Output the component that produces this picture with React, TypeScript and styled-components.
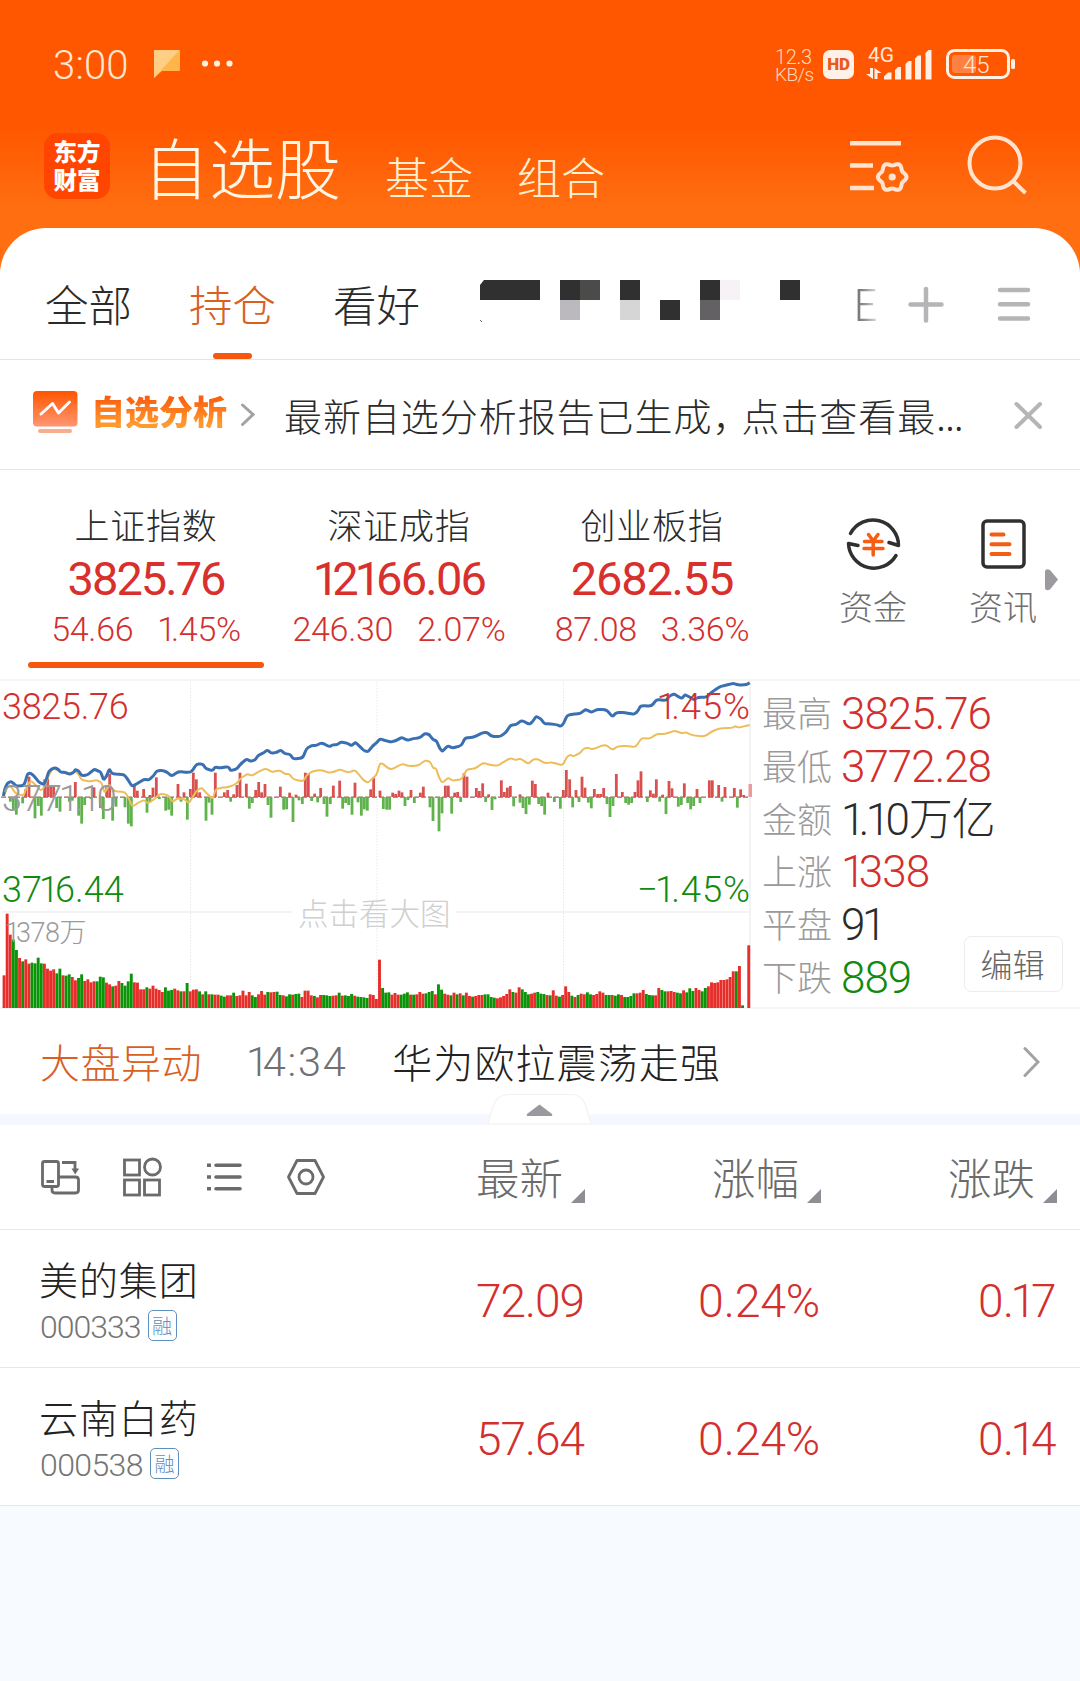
import React from "react";
import styled, { createGlobalStyle } from "styled-components";

const CJK = `"Noto Sans CJK SC", sans-serif`;
const NUM = `Roboto, "Noto Sans CJK SC", sans-serif`;

const GlobalStyle = createGlobalStyle`
  * { box-sizing: border-box; }
  html, body { margin: 0; padding: 0; }
  body { width: 1080px; background: #f7faff; font-family: ${CJK}; font-weight: 300; }
  svg { display: block; flex: none; }
`;

const Screen = styled.div`
  width: 1080px;
  height: 1681px;
  overflow: hidden;
  background: #f7faff;
`;

const Top = styled.div`
  height: 280px;
  background: linear-gradient(#ff5600 0, #ff5600 122px, #ff6f11 212px, #ff6f11 280px);
`;

const Txt = styled.span<{ s: number; c?: string; ls?: number; w?: number; lh?: number }>`
  display: block;
  white-space: nowrap;
  font-family: ${CJK};
  font-size: ${(p) => p.s}px;
  line-height: ${(p) => p.lh ?? p.s}px;
  letter-spacing: ${(p) => p.ls ?? 0}px;
  font-weight: ${(p) => p.w ?? 300};
  color: ${(p) => p.c ?? "#2b2b2b"};
`;
const Num = styled(Txt)`
  font-family: ${NUM};
`;
const Kern = styled.span<{ k: number }>`
  letter-spacing: -${(p) => p.k}em;
`;

/* Roboto's figures are tabular; the 1 is set tighter than the others. */
function Digits({ children }: { children: string }) {
  const chars = [...children];
  return (
    <>
      {chars.map((ch, i) => {
        const k = (ch === "1" && i < chars.length - 1 ? (i === 0 ? 0.15 : 0.11) : 0) + (chars[i + 1] === "1" ? 0.08 : 0);
        return k ? <Kern key={i} k={k}>{ch}</Kern> : ch;
      })}
    </>
  );
}

/* status bar */
const StatusBar = styled.div`
  height: 128px;
  display: flex;
  align-items: center;
  padding: 0 63px 0 53px;
`;
const Clock = styled(Num)`
  padding-top: 3px;
  width: 77px;
`;
const NoteIcon = styled.svg`
  margin-left: 23px;
`;
const StatusRight = styled.div`
  margin-left: auto;
  display: flex;
  align-items: center;
`;
const Speed = styled.div`
  width: 48px;
  padding-top: 3px;
`;
const HdBadge = styled.div`
  width: 31px;
  height: 29px;
  border-radius: 7px;
  background: #fff0e8;
  display: grid;
  place-items: center;
  margin-right: 11px;
`;

/* navigation */
const NavBar = styled.div`
  height: 100px;
  display: flex;
  align-items: flex-start;
  padding: 5px 50px 0 44px;
`;
const Logo = styled.div`
  width: 66px;
  height: 66px;
  border-radius: 14px;
  background: #ff4500;
  display: grid;
  place-content: center;
  padding-bottom: 2px;
`;
const NavTitles = styled.div`
  display: flex;
  align-items: flex-end;
  height: 68px;
  margin-left: 33px;
  gap: 44px;
`;
const NavIcons = styled.div`
  margin-left: auto;
  display: flex;
`;

/* card */
const Card = styled.div`
  position: relative;
  margin-top: -52px;
  background: #fff;
  border-radius: 46px 46px 0 0;
`;
const TabBar = styled.div`
  height: 132px;
  display: flex;
  border-bottom: 1px solid #e4e4e4;
  padding-left: 45px;
`;
const Tab = styled.div`
  position: relative;
  width: 88px;
  margin-right: 56px;
  padding-top: 54px;
`;
const TabMark = styled.div`
  position: absolute;
  left: 24px;
  bottom: 0;
  width: 39px;
  height: 6px;
  border-radius: 3px;
  background: #f6560e;
`;
const Mosaic = styled.svg`
  margin: 50px 0 0 3px;
`;
const CutTab = styled.div`
  width: 27px;
  padding-top: 49px;
  margin-left: 51px;
  overflow: hidden;
  height: 110px;
  mask-image: linear-gradient(90deg, #000 0, rgba(0, 0, 0, 0.75) 40%, transparent 110%);
`;
const TabIcons = styled.svg`
  margin: 54px 0 0 25px;
`;

const Notice = styled.div`
  height: 110px;
  display: flex;
  align-items: flex-start;
  border-bottom: 1px solid #e4e4e4;
  padding-left: 33px;
`;
const NoticeTag = styled.div`
  font: 900 34px/34px ${CJK};
  white-space: nowrap;
  margin: 34px 0 0 13px;
  background: linear-gradient(#fb5e10 10%, #ff9a2e 90%);
  background-clip: text;
  -webkit-background-clip: text;
  color: transparent;
`;
const NoticeText = styled(Txt)`
  margin: 36px 0 0 29px;
  width: 681px;
`;
const Comma = styled.span`
  letter-spacing: -9px;
`;
const Ellipsis = styled.span`
  letter-spacing: -0.6px;
`;

/* indices */
const IndexRow = styled.div`
  height: 209px;
  display: flex;
  padding-left: 20px;
`;
const IndexCol = styled.div`
  position: relative;
  width: 253px;
  display: flex;
  flex-direction: column;
  align-items: center;
  padding: 36px 1px 0 0;
`;
const IndexPair = styled.div`
  display: flex;
  gap: 24px;
  margin-top: 10px;
`;
const IndexValue = styled(Num)`
  margin-top: 14px;
`;
const IndexMark = styled.div`
  position: absolute;
  left: 8px;
  bottom: 11px;
  width: 236px;
  height: 6px;
  border-radius: 3px;
  background: #f6560e;
`;
const Shortcut = styled.div`
  width: 130px;
  display: flex;
  flex-direction: column;
  align-items: center;
  padding-top: 44px;
  gap: 15px;
`;
const Shortcuts = styled.div`
  display: flex;
  margin-left: 29px;
`;
const MoreArrow = styled.svg`
  margin-left: -23px;
`;

/* chart */
const Market = styled.div`
  height: 330px;
  display: flex;
  border-top: 2px solid #f5f5f5;
  border-bottom: 2px solid #f5f5f5;
`;
const ChartBox = styled.div`
  position: relative;
  width: 751px;
  margin-top: -1px;
`;
const ChartLabel = styled(Num)<{ x?: number; r?: number; y: number }>`
  position: absolute;
  top: ${(p) => p.y}px;
  ${(p) => (p.r !== undefined ? `right: ${p.r}px;` : `left: ${p.x}px;`)}
`;
const Stats = styled.div`
  position: relative;
  flex: 1;
  padding: 7px 0 0 11px;
`;
const StatRow = styled.div`
  display: flex;
  align-items: center;
  height: 52.7px;
  gap: 9px;
`;
const StatName = styled(Txt)`
  margin-bottom: 5px;
`;
const EditButton = styled.div`
  position: absolute;
  left: 213px;
  top: 255px;
  width: 99px;
  height: 56px;
  border: 1.5px solid #ececec;
  border-radius: 7px;
  background: #fff;
  display: grid;
  place-items: center;
  padding: 0 2px 2px 0;
`;

const NewsRow = styled.div`
  height: 105px;
  display: flex;
  align-items: center;
  padding: 0 40px 0 40px;
`;
const NewsText = styled(Txt)`
  margin-left: auto;
`;
const NewsTime = styled(Num)`
  margin-left: 44px;
  padding-top: 3px;
`;
const NewsHead = styled.div`
  display: flex;
  align-items: center;
  width: 681px;
  padding-bottom: 2px;
`;
const PushRight = styled.svg`
  margin-left: auto;
`;
const Strip = styled.div`
  position: relative;
  height: 11px;
  background: #f5f9ff;
`;
const Handle = styled.svg`
  position: absolute;
  left: 487px;
  top: -21px;
`;

/* table */
const HeadRow = styled.div`
  height: 105px;
  display: flex;
  background: #fff;
  border-bottom: 1px solid #e8e8e8;
`;
const Tools = styled.div`
  width: 430px;
  padding: 30px 0 0 38px;
`;
const HeadCell = styled.div`
  width: 236px;
  display: flex;
  justify-content: flex-end;
  gap: 8px;
  padding-top: 30px;
`;
const HeadFirst = styled(HeadCell)`
  width: 155px;
`;
const SortMark = styled.svg`
  margin-top: 34px;
`;
const StockRow = styled.div`
  height: 138px;
  display: flex;
  background: #fff;
  border-bottom: 1px solid #e8e8e8;
  padding: 29px 0 0 39px;
`;
const StockName = styled.div`
  width: 300px;
`;
const CodeLine = styled.div`
  display: flex;
  align-items: center;
  gap: 7px;
  margin-top: 10px;
  padding-left: 1px;
`;
const Code = styled(Num)`
  padding-top: 3px;
`;
const Badge = styled.div`
  width: 29px;
  height: 31px;
  border: 1.5px solid #5d90bf;
  border-radius: 5px;
  display: grid;
  place-items: center;
`;
const Cell = styled.div<{ wd: number }>`
  width: ${(p) => p.wd}px;
  display: flex;
  justify-content: flex-end;
  padding-top: 19px;
`;

const RED = "#d2302e";
const GREEN = "#12890f";

/* Volume: bar tops measured up from the floor, in thirds of a pixel; sign gives colour (minus = falling). */
const volume = [
  98, 283, 220, -205, -174, 150, -140, 146, 133, -136, -134, -151, -134, 133, 118, 112, 116, -104, -118, 98, -97, -101,
  93, 83, -90, -101, 81, 86, 77, 80, -80, -94, -92, 76, 71, -65, 67, 81, -75, -67, -80, -103, 77, 76, 56, 56, -62, 58,
  67, 58, 54, 48, -62, -52, -54, 58, 53, -50, 50, -75, 50, 55, 56, -50, 41, -50, 41, -41, 40, 40, -37, -34, 38, 38, -46,
  36, 38, 52, 38, 48, -38, -33, 41, 51, 40, -48, 47, 48, -49, -39, 38, -35, -41, 40, -42, -43, 33, -36, -30, 52, 52, 38,
  -36, 32, 39, -39, -38, -36, 37, 38, -46, 37, -38, -36, -42, 37, -34, -33, -32, -30, 27, 145,
];
volume.splice(97, 2);
volume.splice(118, 0, 41, 39);
const volumeB = [
  -60, -46, -47, 40, 45, 40, -40, -43, -47, 40, -40, 41, 48, 43, -44, -48, -51, 41, -71, -55, 43, 40, -38, 46, -41, 44,
  -38, 46, 36, -34, 36, 39, 39, -41, -41, -33, -31, 29, 32, 36, 42, 56, -48, 46, 62, -56, -48, -41, 43, 46, -48, -43,
  -42, 39, -38, 53, 37, -34, 39, 65, 48, -37, 33, -39, 43, 41, -47, -41, 39, 42, 50, 46, -39, -39, 39, -37, -41, 39,
  -33, -33, -36, -44, 44, 46, 54, -42, -39, -38, 38, 60, -54, -50, 50, 51, 48, -46, -44, 53, -47, -59, -51, 60, 54,
  -50, -60, 65, 77, 75, 77, 84, 84, 86, 93, 110, -110, 126, -8, 0, 188,
];
const volumes = volume.slice(0, 122).concat(volumeB);

/* Strength columns: [x, height], both in thirds of a pixel. */
const up: number[][] = [
  [87, 61], [77, 23], [134, 53], [143, 56], [152, 36], [161, 36], [226, 45], [282, 29], [329, 69], [320, 36], [403, 33],
  [412, 19], [431, 24], [450, 6], [459, 28], [469, 59], [534, 39], [552, 14], [571, 24], [580, 73], [589, 53], [599, 14],
  [646, 73], [673, 14], [683, 21], [701, 8], [711, 36], [720, 73], [739, 40], [767, 21], [776, 45], [785, 14], [795, 39],
  [841, 31], [869, 13], [888, 7], [916, 73], [925, 70], [944, 10], [962, 27], [1000, 34], [1019, 49], [1065, 43],
  [1112, 23], [1121, 59], [1140, 19], [1178, 13], [1187, 9], [1197, 19], [1206, 14], [1233, 21], [1261, 13], [1270, 31],
  [1336, 34], [1345, 34], [1364, 13], [1373, 15], [1392, 71], [1401, 61], [1429, 27], [1438, 18], [1448, 41], [1466, 8],
  [1504, 50], [1513, 15], [1522, 28], [1531, 33], [1560, 8], [1597, 49], [1606, 39], [1644, 13], [1690, 21], [1699, 81],
  [1709, 53], [1728, 21], [1746, 61], [1755, 28], [1783, 24], [1793, 9], [1802, 9], [1811, 27], [1849, 69], [1867, 15],
  [1905, 15], [1914, 50], [1923, 77], [1951, 20], [1960, 10], [1969, 53], [1988, 7], [2007, 48], [2016, 26], [2053, 41],
  [2091, 24], [2128, 50], [2137, 50], [2156, 36], [2175, 30], [2203, 27], [2222, 23], [2231, 6],
];
const down: number[][] = [
  [31, 14], [40, 37], [49, 53], [68, 19], [105, 64], [115, 27], [124, 56], [170, 33], [180, 44], [208, 14], [217, 11],
  [236, 56], [245, 80], [254, 24], [273, 6], [301, 33], [310, 66], [338, 71], [348, 29], [375, 31], [385, 80], [394, 88],
  [441, 47], [450, 16], [478, 6], [497, 41], [506, 38], [515, 56], [543, 14], [562, 68], [618, 71], [627, 17], [636, 53],
  [692, 14], [748, 35], [757, 18], [804, 24], [813, 62], [851, 38], [860, 37], [879, 75], [897, 10], [907, 21],
  [935, 12], [953, 16], [972, 21], [981, 59], [991, 21], [1028, 35], [1037, 18], [1046, 24], [1056, 53], [1074, 16],
  [1084, 56], [1093, 37], [1102, 41], [1150, 36], [1160, 38], [1169, 38], [1215, 27], [1224, 9], [1243, 18], [1290, 31],
  [1299, 72], [1317, 103], [1326, 49], [1355, 50], [1382, 15], [1457, 15], [1476, 39], [1485, 7], [1541, 28], [1560, 17],
  [1569, 33], [1578, 51], [1588, 23], [1616, 21], [1625, 27], [1634, 53], [1663, 15], [1681, 35], [1718, 31], [1737, 15],
  [1765, 17], [1774, 34], [1821, 21], [1830, 60], [1839, 27], [1877, 18], [1886, 23], [1895, 18], [1942, 15], [1979, 14],
  [1998, 51], [2035, 29], [2044, 24], [2063, 18], [2072, 37], [2081, 27], [2100, 18], [2166, 14], [2212, 32],
];

const priceA =
  "10,378 15,355 22,340 32,334 42,341 48,348 70,347 76,335 82,313 90,309 98,314 108,325 116,336 132,344 140,325 146,305 155,297 165,293 175,298 182,307 195,307 208,313 220,308 226,299 235,302 245,317 262,315 272,307 283,298 293,302 302,306 311,330 320,318 328,297 336,311 350,312 372,314 382,326 396,349 410,342 432,328 446,330 460,318 470,303 487,301 500,306 515,318 535,305 565,307 575,305 590,282 608,282 618,296 638,302 645,291 660,294 685,290 692,302 710,297 722,282 740,267 752,274 765,270 775,256 790,249 802,240 815,250 830,247 842,240 855,251 870,253 880,267 908,264 920,235 935,227 950,226 965,218 988,230 1000,224 1012,224 1022,216 1040,219 1055,227 1066,217 1078,228 1092,242 1104,245 1118,228 1130,218";
const priceB =
  "30,207 45,211 62,216 78,212 95,202 112,211 130,206 150,203 165,190 178,194 188,208 200,213 208,233 217,245 233,227 248,234 274,227 285,204 310,202 340,187 352,188 365,199 390,200 408,187 422,165 438,164 455,151 478,163 488,155 498,139 512,146 523,161 535,161 560,164 572,169 580,162 591,137 608,132 630,131 647,118 664,127 680,119 700,118 712,122 727,140 740,127 765,128 792,133 803,124 812,107 845,108 860,88 888,92 900,77 913,72 935,86 945,74 960,82 972,89 985,82 1010,82 1025,66 1050,50 1070,45 1090,40 1105,45 1130,44 1139,38";
const avgA =
  "12,378 22,350 30,345 45,368 60,375 72,375 80,350 92,332 104,342 122,362 132,352 145,320 155,300 165,296 180,305 205,312 225,303 235,312 245,330 270,334 290,330 305,338 314,370 328,342 342,364 375,366 387,386 397,410 415,398 432,390 443,400 460,390 478,373 490,372 505,376 517,396 533,385 555,388 566,400 580,378 590,362 605,353 620,370 638,387 647,358 665,353 680,352 700,346 712,338 722,325 742,312 755,317 775,306 797,295 815,306 840,301 855,312 868,312 880,328 910,334 920,315 940,303 965,300 985,308 1000,306 1020,298 1045,308 1065,300 1080,318 1092,332 1104,338 1118,325";
const avgB =
  "20,314 31,276 62,300 97,281 115,288 145,287 165,271 180,275 190,295 198,295 208,325 217,338 235,323 247,332 275,328 290,298 315,296 340,278 360,285 385,287 400,276 422,264 435,270 452,266 475,282 490,268 505,268 525,280 545,277 578,286 590,262 600,254 610,259 630,249 640,237 652,233 668,238 705,223 728,240 742,229 770,228 795,231 803,222 815,204 840,206 860,192 885,192 915,182 935,190 948,187 970,197 1005,199 1025,185 1045,176 1090,173 1095,168 1105,173 1139,165";

const toPx = (s: string, dx: number) =>
  s.split(" ").map((p) => {
    const [x, y] = p.split(",").map(Number);
    return [(x + dx) / 3, y / 3 - 10];
  });
/* Rounds each vertex slightly while still passing close to it. */
const smooth = (pts: number[][]) => {
  const mix = (a: number[], b: number[], t: number) => [a[0] + (b[0] - a[0]) * t, a[1] + (b[1] - a[1]) * t];
  let d = `M${pts[0].join(" ")}`;
  for (let i = 1; i < pts.length - 1; i++) {
    const a = mix(pts[i], pts[i - 1], 0.3);
    const b = mix(pts[i], pts[i + 1], 0.3);
    d += `L${a.join(" ")}Q${pts[i].join(" ")} ${b.join(" ")}`;
  }
  return d + `L${pts[pts.length - 1].join(" ")}`;
};
const pricePath = smooth([...toPx(priceA, 0), ...toPx(priceB, 1110)]);
const avgPath = smooth([...toPx(avgA, 0), ...toPx(avgB, 1110)]);

function Chart() {
  return (
    <svg width="754" height="328" viewBox="0 0 754 328">
      {[190.5, 377, 563.5].map((x) => (
        <path key={x} d={`M${x} 2V327`} stroke="#e9e9e9" strokeWidth="1" strokeDasharray="1.5 1.5" />
      ))}
      <path d="M2 232H292M456 232H750" stroke="#f3f3f3" strokeWidth="2" />
      <path d="M750 0V328" stroke="#f3f3f3" strokeWidth="2" />
      <path d="M1 117.2H748" stroke="#8f6a5a" strokeWidth="1.2" strokeDasharray="5 2" />
      {down.map(([x, h]) => (
        <rect key={x} x={x / 3 - 1.4} y={117} width="2.8" height={h / 3} fill="#5fb24c" />
      ))}
      {up.map(([x, h]) => (
        <rect key={x} x={x / 3 - 1.4} y={117 - h / 3} width="2.8" height={h / 3} fill="#d9514e" />
      ))}
      <rect x="748.5" y="104" width="3.5" height="13" fill="#ec9a9c" />
      <path d={avgPath} fill="none" stroke="#edbd5a" strokeWidth="2" strokeLinejoin="round" />
      <path d={pricePath} fill="none" stroke="#3a70b2" strokeWidth="3" strokeLinejoin="round" />
      {volumes.map((v, i) => (
        <rect
          key={i}
          x={2.6 + (i * 744.7) / (volumes.length - 1)}
          y={328 - Math.abs(v) / 3}
          width="2.9"
          height={Math.abs(v) / 3}
          fill={v < 0 ? "#0b9408" : "#e62e2b"}
        />
      ))}
    </svg>
  );
}

const indices = [
  { name: "上证指数", value: "3825.76", diff: "54.66", pct: "1.45%", ls: -2 },
  { name: "深证成指", value: "12166.06", diff: "246.30", pct: "2.07%", ls: -1.8 },
  { name: "创业板指", value: "2682.55", diff: "87.08", pct: "3.36%", ls: -1.2 },
];
const stats = [
  ["最高", "3825.76", RED],
  ["最低", "3772.28", RED],
  ["金额", "1.10万亿", "#2b2b2b"],
  ["上涨", "1338", RED],
  ["平盘", "91", "#2b2b2b"],
  ["下跌", "889", GREEN],
];
const stocks = [
  { name: "美的集团", code: "000333", ls: -1, last: "72.09", pct: "0.24%", diff: "0.17" },
  { name: "云南白药", code: "000538", ls: -0.6, last: "57.64", pct: "0.24%", diff: "0.14" },
];
const mosaic: [number, number, string][] = [
  [80, 0, "#303030"], [100, 0, "#4b4c4a"], [80, 20, "#bcb9be"], [140, 0, "#303030"], [140, 20, "#d6d6d6"],
  [180, 20, "#303030"], [220, 0, "#303030"], [220, 20, "#636163"], [240, 0, "#f7f2f6"], [300, 0, "#303030"],
];

const gearPath = (cx: number, cy: number, r: number, a: number) => {
  let d = "";
  for (let i = 0; i <= 72; i++) {
    const t = (i / 72) * Math.PI * 2;
    const rr = r + a * Math.cos(6 * t);
    d += `${i ? "L" : "M"}${(cx + rr * Math.cos(t)).toFixed(2)} ${(cy + rr * Math.sin(t)).toFixed(2)}`;
  }
  return d + "Z";
};

export default function App() {
  return (
    <Screen>
      <GlobalStyle />
      <Top>
        <StatusBar>
          <Clock s={40} c="#ffe6d2" ls={0.2}>3:00</Clock>
          <NoteIcon width="82" height="30" viewBox="0 0 82 30">
            <path d="M2 1H26a1 1 0 0 1 1 1V21a1 1 0 0 1-1 1H9L1 29V2a1 1 0 0 1 1-1Z" fill="#ffb54a" />
            <path d="M2 1H26.500L1 29V2a1 1 0 0 1 1-1Z" fill="#ffce85" />
            <g fill="#fff0e4">
              <circle cx="52" cy="14.500" r="3.100" />
              <circle cx="64" cy="14.500" r="3.100" />
              <circle cx="76.500" cy="14.500" r="3.100" />
            </g>
          </NoteIcon>
          <StatusRight>
            <Speed>
              <Num s={20} lh={18} c="#ffd9bd" ls={-0.3}>12.3</Num>
              <Num s={19} lh={18} c="#ffd9bd" ls={-0.6}>KB/s</Num>
            </Speed>
            <HdBadge><Num s={17} w={900} c="#e85a1c" ls={-0.3}>HD</Num></HdBadge>
            <svg width="152" height="48" viewBox="865 40 152 48">
              <text x="868" y="62" fontFamily="Roboto" fontSize="21" fontWeight="400" fill="#ffe6d6" letterSpacing="0">4G</text>
              <g fill="#fff0e6">
                <path d="M870 68h3v11l-7-5h4ZM874.500 79V68l7 5h-4v6Z" />
                <path d="M884 79.500v-3l4-4h3.500v7Z M895 70l3-3h3v12.500h-6ZM905.500 64l3-3h3v18.500h-6ZM915 58.500l3-3h3v24h-6ZM925.500 53l3-3h3v29.500h-6Z" />
              </g>
              <rect x="947.500" y="50.500" width="61" height="27" rx="7" fill="none" stroke="#fff0e6" strokeWidth="3" />
              <rect x="952" y="55" width="24" height="18" rx="3" fill="#ff8142" />
              <rect x="1011" y="59" width="4" height="10" rx="1.500" fill="#fff0e6" />
              <text x="963" y="73" fontFamily="Roboto" fontSize="24" fontWeight="300" fill="#ffe6d6">45</text>
            </svg>
          </StatusRight>
        </StatusBar>
        <NavBar>
          <Logo>
            <Txt s={23.5} lh={28} w={900} c="#fff">东方</Txt>
            <Txt s={23.5} lh={28} w={900} c="#fff">财富</Txt>
          </Logo>
          <NavTitles>
            <Txt s={66} lh={72} c="#fff6e6">自选股</Txt>
            <Txt s={44} c="#ffefd2" lh={49}>基金</Txt>
            <Txt s={44} c="#ffefd2" lh={49}>组合</Txt>
          </NavTitles>
          <NavIcons>
            <svg width="182" height="66" viewBox="848 133 182 66" fill="none" stroke="#ffe3cf" strokeWidth="4.500">
              <path d="M850 143.200H901M850 165.500H873M850 188H874" />
              <path d={gearPath(892.2, 177, 12.9, 1.4)} strokeWidth="4" />
              <circle cx="892.200" cy="177" r="3.600" fill="#ffe3cf" stroke="none" />
              <circle cx="995" cy="163" r="25.500" strokeWidth="4" />
              <path d="M1012.500 180.500L1025.500 193" strokeWidth="4" />
            </svg>
          </NavIcons>
        </NavBar>
      </Top>
      <Card>
        <TabBar>
          <Tab><Txt s={43.5}>全部</Txt></Tab>
          <Tab><Txt s={43.5} c="#d9601f">持仓</Txt><TabMark /></Tab>
          <Tab><Txt s={43.5}>看好</Txt></Tab>
          <Mosaic width="322" height="46" viewBox="0 -2 322 46">
            <path d="M4 0H60V20H0V5Z" fill="#303030" />
            {mosaic.map(([x, y, c]) => (
              <rect key={`${x}-${y}`} x={x} y={y} width="20" height="20" fill={c} />
            ))}
            <path d="M0 40l2 2M50 45h2M73 45h2" stroke="#666" />
          </Mosaic>
          <CutTab><Txt s={44} lh={50} c="#666">E</Txt></CutTab>
          <TabIcons width="130" height="44" viewBox="905 282 130 44" fill="none" stroke="#b5b4b6" strokeWidth="4.500" strokeLinecap="round">
            <path d="M926 289V320.500M910.500 304.500H941.500" />
            <path d="M1000 290H1028M1000 304.300H1028M1000 318.600H1028" />
          </TabIcons>
        </TabBar>
        <Notice>
          <svg width="45" height="74" viewBox="33 360 45 74">
            <defs>
              <linearGradient id="tile" x1="0" y1="0" x2="0" y2="1">
                <stop offset="0" stopColor="#ff5500" />
                <stop offset="1" stopColor="#ff9672" />
              </linearGradient>
            </defs>
            <rect x="33" y="391" width="44.500" height="35.500" rx="4" fill="url(#tile)" />
            <rect x="38" y="429" width="34" height="4" rx="2" fill="#f9ad8e" />
            <path d="M41 414L52.500 403.500L58.500 413L69.500 402" fill="none" stroke="#fff" strokeWidth="3" strokeLinecap="round" strokeLinejoin="round" />
          </svg>
          <NoticeTag>自选分析</NoticeTag>
          <svg width="28" height="74" viewBox="227 360 28 74">
            <path d="M242.500 405L253 414.500L242.500 424.500" fill="none" stroke="#a3a1a4" strokeWidth="3" strokeLinecap="round" />
          </svg>
          <NoticeText s={38} ls={0.95}>最新自选分析报告已生成<Comma>，</Comma>点击查看最<Ellipsis>...</Ellipsis></NoticeText>
          <svg width="80" height="74" viewBox="965 360 80 74">
            <path d="M1016.500 404L1040 427M1040 404L1016.500 427" fill="none" stroke="#b5b4b6" strokeWidth="4" strokeLinecap="round" />
          </svg>
        </Notice>
        <IndexRow>
          {indices.map((it, i) => (
            <IndexCol key={it.name}>
              <Txt s={35} ls={0.8}>{it.name}</Txt>
              <IndexValue s={47} w={400} c="#d8302d" ls={it.ls}><Digits>{it.value}</Digits></IndexValue>
              <IndexPair>
                <Num s={34} c={RED} ls={-0.3}>{it.diff}</Num>
                <Num s={34} c={RED} ls={-0.3}><Digits>{it.pct}</Digits></Num>
              </IndexPair>
              {i === 0 && <IndexMark />}
            </IndexCol>
          ))}
          <Shortcuts>
            <Shortcut>
              <svg width="60" height="60" viewBox="843 513.500 60 60" fill="none" stroke="#303030" strokeWidth="3.500" strokeLinecap="round" strokeLinejoin="round">
                <path d="M850.500 533A25.500 25.500 0 0 1 898.500 545L889 542" />
                <path d="M896 555A25.500 25.500 0 0 1 848.500 543L858 545" />
                <path d="M868.500 534L873.200 540.500L878 534M873.200 540.500V554.500M864.500 541H882M864 548H883" stroke="#f55d13" />
              </svg>
              <Txt s={34} c="#6e6e6e">资金</Txt>
            </Shortcut>
            <Shortcut>
              <svg width="60" height="60" viewBox="973.500 513.500 60 60" fill="none" strokeWidth="3.500" strokeLinecap="round">
                <rect x="983.500" y="520.500" width="41" height="46" rx="4" stroke="#303030" />
                <path d="M992 534H1004M992 543.700H1010M992 553.500H1010" stroke="#f55d13" strokeWidth="4" />
              </svg>
              <Txt s={34} c="#6e6e6e">资讯</Txt>
            </Shortcut>
            <MoreArrow width="14" height="130" viewBox="1045 470 14 130">
              <path d="M1045 571q1-3 5-1L1058 579.500L1050 589.500q-4 2-5-1Z" fill="#9c9a9e" />
            </MoreArrow>
          </Shortcuts>
        </IndexRow>
        <Market>
          <ChartBox>
            <Chart />
            <ChartLabel s={36} c={RED} x={2} y={9} ls={-0.3}>3825.76</ChartLabel>
            <ChartLabel s={36} c="#9a9a9a" x={2} y={101}><Digits>3771.10</Digits></ChartLabel>
            <ChartLabel s={36} c={GREEN} x={2} y={192}><Digits>3716.44</Digits></ChartLabel>
            <ChartLabel s={36.5} c={RED} r={0} y={9} ls={0.9}><Digits>1.45%</Digits></ChartLabel>
            <ChartLabel s={36.5} c={GREEN} r={0} y={192} ls={0.9}><Digits>−1.45%</Digits></ChartLabel>
            <ChartLabel s={27} c="#9a9a9a" x={5} y={240} ls={-0.5}><Digits>1378万</Digits></ChartLabel>
            <ChartLabel s={30.5} c="#cfcfcf" x={298} y={220}>点击看大图</ChartLabel>
          </ChartBox>
          <Stats>
            {stats.map(([k, v, c]) => (
              <StatRow key={k}>
                <StatName s={35} c="#9a9a9a">{k}</StatName>
                <Num s={44} c={c} ls={-1}><Digits>{v}</Digits></Num>
              </StatRow>
            ))}
            <EditButton><Txt s={32} c="#666">编辑</Txt></EditButton>
          </Stats>
        </Market>
        <NewsRow>
          <NewsHead>
            <Txt s={40} c="#d9601f" ls={0.5}>大盘异动</Txt>
            <NewsTime s={41.5} c="#707070" ls={1.7}><Digits>14:34</Digits></NewsTime>
            <NewsText s={40} ls={1.1} c="#222">华为欧拉震荡走强</NewsText>
          </NewsHead>
          <PushRight width="18" height="32" viewBox="1022 1046 18 32">
            <path d="M1025 1048.500L1038 1062L1025 1075.500" fill="none" stroke="#a3a1a4" strokeWidth="3" strokeLinecap="round" />
          </PushRight>
        </NewsRow>
      </Card>
      <Strip>
        <Handle width="106" height="32" viewBox="487 1093 106 32">
          <path d="M488 1124C493 1106 494 1094.500 509 1094.500H571C585 1094.500 586 1106 591 1124Z" fill="#fff" stroke="#f4f0f3" strokeWidth="1.200" />
          <path d="M527 1114L539.500 1104.500L552 1114Q553 1116 551 1116H528Q526 1116 527 1114Z" fill="#9b999d" />
        </Handle>
      </Strip>
      <HeadRow>
        <Tools>
          <svg width="290" height="44" viewBox="38 1155 290 44" fill="none" stroke="#6b6b6b" strokeWidth="2.800">
            <rect x="42.500" y="1161.500" width="16" height="25" rx="2" />
            <path d="M46.500 1181.500H54M62 1162.500H75V1170M52 1187V1190q0 3 3 3H75.500q3 0 3-3V1180q0-3-3-3H59" />
            <path d="M71.500 1168.500H79L75.200 1174.500Z" fill="#6b6b6b" stroke="none" />
            <rect x="124.500" y="1160" width="15" height="15" />
            <circle cx="152.500" cy="1167" r="8" />
            <rect x="124.500" y="1180" width="15" height="15" />
            <rect x="144.500" y="1180" width="15" height="15" />
            <g strokeWidth="3.600">
              <path d="M216 1165.200H240M216 1177H240M216 1188.800H240" strokeLinecap="round" />
              <path d="M207 1165.200H211M207 1177H211M207 1188.800H211" />
            </g>
            <path d="M297 1160.500H315L323.500 1177L315 1193.500H297L288.500 1177Z" strokeLinejoin="round" />
            <circle cx="306" cy="1177" r="7" />
          </svg>
        </Tools>
        {["最新", "涨幅", "涨跌"].map((t, i) => {
          const C = i === 0 ? HeadFirst : HeadCell;
          return (
            <C key={t}>
              <Txt s={43.5} lh={44} c="#6b6b6b">{t}</Txt>
              <SortMark width="14" height="14" viewBox="0 0 14 14">
                <path d="M14 0V14H0Z" fill="#8f8e95" />
              </SortMark>
            </C>
          );
        })}
      </HeadRow>
      {stocks.map((s) => (
        <StockRow key={s.code}>
          <StockName>
            <Txt s={39} ls={0.9} c="#222">{s.name}</Txt>
            <CodeLine>
              <Code s={32} c="#757575" ls={s.ls}>{s.code}</Code>
              <Badge><Txt s={20} c="#5d90bf">融</Txt></Badge>
            </CodeLine>
          </StockName>
          <Cell wd={245}><Num s={46} c={RED} ls={-1}>{s.last}</Num></Cell>
          <Cell wd={236}><Num s={46.5} c={RED} ls={-0.2}>{s.pct}</Num></Cell>
          <Cell wd={236}><Num s={46} c={RED} ls={-0.4}><Digits>{s.diff}</Digits></Num></Cell>
        </StockRow>
      ))}
    </Screen>
  );
}
